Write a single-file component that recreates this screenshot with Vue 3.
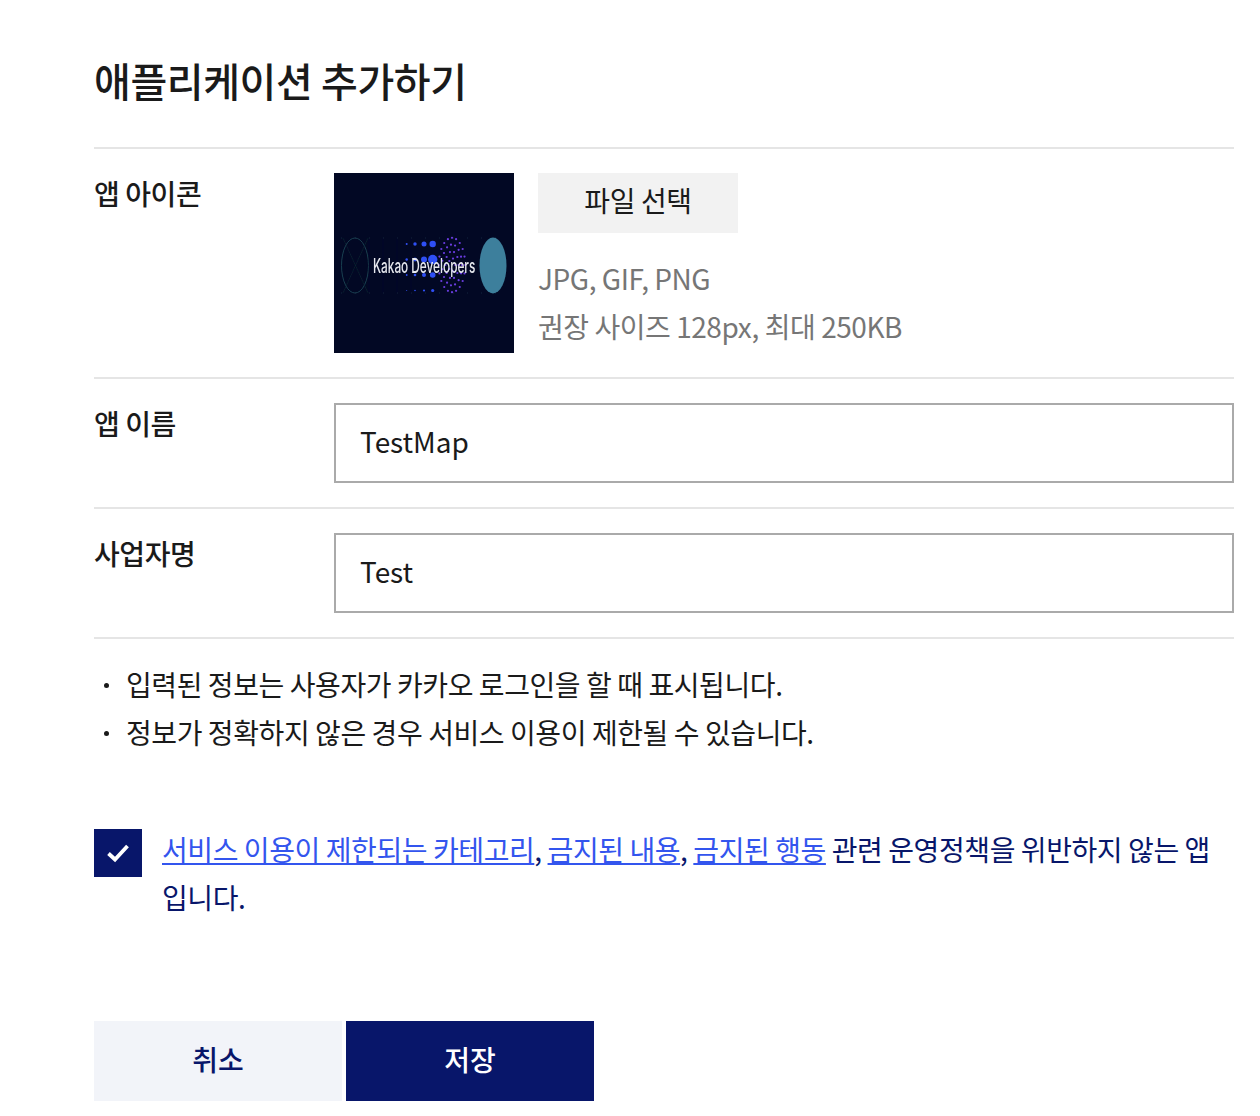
<template>
  <div class="page">
    <h1 class="title">애플리케이션 추가하기</h1>

    <div class="row">
      <div class="label">앱 아이콘</div>
      <div class="icon-field">
        <svg class="app-icon" viewBox="0 0 180 180" xmlns="http://www.w3.org/2000/svg">
          <defs>
            <filter id="soft" x="-5%" y="-5%" width="110%" height="110%">
              <feGaussianBlur stdDeviation="0.35" />
            </filter>
          </defs>
          <rect width="180" height="180" fill="#020824" />
          <g filter="url(#soft)">
            <g stroke="#0f2533" stroke-width="0.6" fill="none">
              <ellipse cx="21" cy="92.500" rx="13.500" ry="27.500" stroke="#1a3f50" stroke-width="1" />
              <path d="M9 65L34 120M34 65L9 120" />
              <path d="M7 65H173M7 120H173" stroke-dasharray="1 13" stroke="#233a52" />
              <path d="M35 65V120M49 65V120M63 65V120M77 65V120" stroke="#081229" />
            </g>
            <circle v-for="d in dots" :key="d.id" :cx="d.x" :cy="d.y" :r="d.r" fill="#2f4ff5" />
            <circle v-for="d in ring" :key="d.id" :cx="d.x" :cy="d.y" r="1.100" fill="#6a3ce0" />
            <ellipse cx="159" cy="92.500" rx="13.500" ry="28" fill="#3d7f9c" />
            <text transform="translate(39 99.500) scale(0.590 1)" class="logo-text">Kakao Developers</text>
          </g>
        </svg>
        <div class="file-info">
          <button class="file-btn" type="button">파일 선택</button>
          <p class="hint first">JPG, GIF, PNG</p>
          <p class="hint">권장 사이즈 128px, 최대 250KB</p>
        </div>
      </div>
    </div>

    <div class="row">
      <div class="label">앱 이름</div>
      <input class="input" type="text" value="TestMap" />
    </div>

    <div class="row">
      <div class="label">사업자명</div>
      <input class="input" type="text" value="Test" />
    </div>

    <ul class="notes">
      <li>입력된 정보는 사용자가 카카오 로그인을 할 때 표시됩니다.</li>
      <li>정보가 정확하지 않은 경우 서비스 이용이 제한될 수 있습니다.</li>
    </ul>

    <div class="agree">
      <span class="check">
        <svg width="24" height="24" viewBox="0 0 24 24" fill="none">
          <path d="M2.500 12.500L9 18.500L21.500 5" stroke="#fff" stroke-width="3.800" />
        </svg>
      </span>
      <p class="agree-text">
        <a href="#">서비스 이용이 제한되는 카테고리</a>, <a href="#">금지된 내용</a>, <a href="#">금지된 행동</a> 관련 운영정책을 위반하지 않는 앱입니다.
      </p>
    </div>

    <div class="actions">
      <button class="btn cancel" type="button">취소</button>
      <button class="btn save" type="button">저장</button>
    </div>
  </div>
</template>

<script setup>
// dot columns of the logo picture
const dots = []
const cols = [
  { x: 72.700, rs: [1, 1.200, 0.900, 0.500] },
  { x: 81, rs: [1.700, 1.900, 1.300, 0.800] },
  { x: 90, rs: [2.500, 3, 2, 1.100] },
  { x: 98.700, rs: [3.200, 4.700, 2.800, 1.600] },
]
cols.forEach((c) => {
  c.rs.forEach((r, i) => {
    dots.push({ id: `${c.x}-${i}`, x: c.x, y: 71 + i * 15.500, r })
  })
})

const ring = []
for (let level = 1; level <= 4; level++) {
  const count = level * 5
  for (let i = 0; i < count; i++) {
    const a = (i / count) * Math.PI * 2
    ring.push({
      id: `${level}-${i}`,
      x: 118 + Math.cos(a) * level * 3.300,
      y: 92 + Math.sin(a) * level * 6.800,
    })
  }
}
</script>

<style>
body {
  background: #fff;
}
</style>

<style scoped>
.page {
  width: 1140px;
  margin-left: 94px;
  font-family: "Noto Sans CJK KR", "Noto Sans", sans-serif;
  color: #1a1a1a;
}
.title {
  margin: 0;
  height: 149px;
  box-sizing: border-box;
  padding-top: 51px;
  font-size: 40px;
  line-height: 58px;
  font-weight: 500;
  letter-spacing: -0.4px;
  border-bottom: 2px solid #e5e5e5;
}
.row {
  display: flex;
  padding: 24px 0;
  border-bottom: 2px solid #e5e5e5;
}
.label {
  width: 240px;
  flex-shrink: 0;
  margin-top: -1px;
  font-size: 28px;
  line-height: 42px;
  font-weight: 500;
  letter-spacing: -0.4px;
}
.icon-field {
  display: flex;
  gap: 24px;
}
.app-icon {
  display: block;
  width: 180px;
  height: 180px;
}
.logo-text {
  font-family: "Inter", sans-serif;
  font-size: 20px;
  font-weight: 500;
  fill: #e6e8ee;
}
.file-btn {
  display: block;
  width: 200px;
  height: 60px;
  padding: 0 0 6px;
  border: 0;
  background: #f2f2f2;
  font-family: inherit;
  font-size: 28px;
  color: #1a1a1a;
  letter-spacing: -0.4px;
}
.hint {
  margin: 0;
  font-size: 28px;
  line-height: 48px;
  color: #767676;
  letter-spacing: -0.45px;
}
.hint.first {
  margin-top: 21px;
}
.input {
  display: block;
  flex: 1;
  min-width: 0;
  height: 80px;
  box-sizing: border-box;
  padding: 0 24px 4px;
  border: 2px solid #aaa;
  background: #fff;
  font-family: inherit;
  font-size: 28px;
  letter-spacing: -0.05px;
  color: #1a1a1a;
  outline: none;
}
.notes {
  list-style: none;
  margin: 21px 0 0;
  padding: 0;
}
.notes li {
  position: relative;
  padding-left: 32px;
  font-size: 28px;
  line-height: 48px;
  letter-spacing: -0.42px;
}
.notes li::before {
  content: "";
  position: absolute;
  left: 10px;
  top: 23px;
  width: 5px;
  height: 5px;
  border-radius: 50%;
  background: #1a1a1a;
}
.agree {
  display: flex;
  gap: 20px;
  margin-top: 73px;
}
.check {
  flex-shrink: 0;
  width: 48px;
  height: 48px;
  display: flex;
  align-items: center;
  justify-content: center;
  background: #08166a;
}
.agree-text {
  margin: -4px 0 0;
  padding-right: 10px;
  font-size: 28px;
  line-height: 48px;
  color: #08166a;
  letter-spacing: -0.42px;
}
.agree-text a {
  color: #3355ee;
  text-decoration: underline;
}
.actions {
  display: flex;
  gap: 4px;
  margin-top: 100px;
}
.btn {
  width: 248px;
  height: 80px;
  padding: 0 0 4px;
  border: 0;
  font-family: inherit;
  font-size: 28px;
  font-weight: 500;
}
.cancel {
  background: #f2f4f9;
  color: #08166a;
}
.save {
  background: #08166a;
  color: #fff;
}
</style>
